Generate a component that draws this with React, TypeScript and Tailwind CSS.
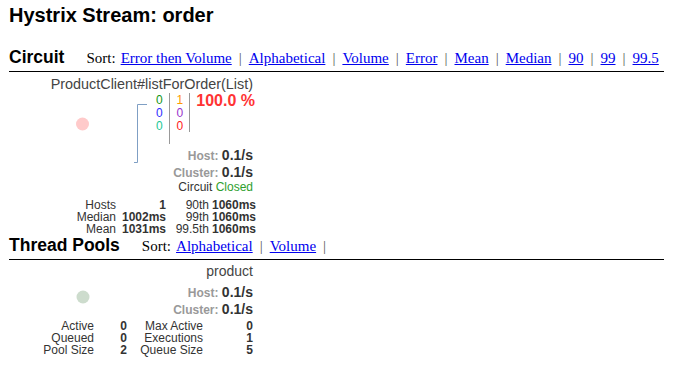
import React from 'react';

const sans = "font-['Liberation_Sans',Arial,sans-serif]";
const serif = "font-['Liberation_Serif','Times_New_Roman',serif]";

interface SortMenuProps {
  items: string[];
  trailing?: boolean;
}

const SortMenu: React.FC<SortMenuProps> = ({ items, trailing }) => (
  <div className={`${serif} text-[15px] leading-[22px] text-black ml-[22px] flex items-baseline`}>
    <span>Sort:</span>
    {items.map((item, idx) => (
      <React.Fragment key={item}>
        <a href="#" className={`text-[#0000ee] underline ${idx === 0 ? 'ml-[5px]' : ''}`}>
          {item}
        </a>
        {(idx < items.length - 1 || trailing) && <span className="mx-[7px] text-[#555]">|</span>}
      </React.Fragment>
    ))}
  </div>
);

const SectionHeader: React.FC<{ title: string; sort: string[]; trailing?: boolean; pb: string }> = ({
  title,
  sort,
  trailing,
  pb,
}) => (
  <div className={`flex items-baseline w-[655px] border-b border-black ${pb}`}>
    <h2 className="text-[17.5px] leading-[22px] font-bold text-black">{title}</h2>
    <SortMenu items={sort} trailing={trailing} />
  </div>
);

// fixed height so the mixed font sizes don't grow the line box
const RateRow: React.FC<{ label: string; value: string }> = ({ label, value }) => (
  <div className="h-[17px] text-[12px] leading-[16px]">
    <span className="font-bold text-[#999]">{label}: </span>
    <span className="text-[14px] font-bold text-[#333]">{value}</span>
  </div>
);

const circuitStats = [
  ['Hosts', '1', '90th', '1060ms'],
  ['Median', '1002ms', '99th', '1060ms'],
  ['Mean', '1031ms', '99.5th', '1060ms'],
];

const poolStats = [
  ['Active', '0', 'Max Active', '0'],
  ['Queued', '0', 'Executions', '1'],
  ['Pool Size', '2', 'Queue Size', '5'],
];

export default function App() {
  return (
    <div className={`${sans} bg-white min-h-[373px] pl-[9px] text-[#333]`}>
      <h1 className="pt-[3px] text-[20px] leading-[24px] font-bold text-black">Hystrix Stream: order</h1>

      {/* Circuit */}
      <div className="mt-[19px]">
        <SectionHeader
          title="Circuit"
          pb="pb-[2px]"
          sort={['Error then Volume', 'Alphabetical', 'Volume', 'Error', 'Mean', 'Median', '90', '99', '99.5']}
        />
      </div>

      <div className="relative w-[247px] h-[162px] text-right">
        <svg className="absolute inset-0 pointer-events-none" width="247" height="162">
          <circle cx="73.5" cy="52" r="6.5" fill="#ffcaca" />
          <polyline points="138,32.5 128.5,32.5 128.5,90.5 125,90.5" fill="none" stroke="#7f9fc4" strokeWidth="1" />
        </svg>

        <div className="pt-[4px] pr-[3px] text-[14.4px] leading-[16px] text-[#444]">ProductClient#listForOrder(List)</div>

        <div className="flex justify-end items-start mt-[1px] pr-[1px]">
          <div className="h-[51px] border-r border-[#999] pr-[6px] pt-[1px] text-[12px] leading-[13px]">
            <div className="text-[#139613]">0</div>
            <div className="text-[#2f2fff]">0</div>
            <div className="text-[#1cc896]">0</div>
          </div>
          <div className="h-[39px] border-r border-[#999] pl-[7px] pr-[6px] pt-[1px] text-[12px] leading-[13px]">
            <div className="text-[#ff9900]">1</div>
            <div className="text-[#9933cc]">0</div>
            <div className="text-[#ff1a1a]">0</div>
          </div>
          <div className="pl-[6px] text-[16px] leading-[16px] font-bold text-[#ff3333]">100.0 %</div>
        </div>

        <div className="mt-[3px] pr-[3px]">
          <RateRow label="Host" value="0.1/s" />
          <RateRow label="Cluster" value="0.1/s" />
          <div className="text-[12px] leading-[12px] text-[#333]">
            Circuit <span className="text-[#2ea02e]">Closed</span>
          </div>
        </div>

        <div className="mt-[6px] ml-auto w-fit grid grid-cols-[60px_50px_43px_47px] text-[12px] leading-[12px]">
          {circuitStats.map((row) => (
            <React.Fragment key={row[0]}>
              <div className="text-right text-[#333]">{row[0]}</div>
              <div className="text-right font-bold text-[#333]">{row[1]}</div>
              <div className="text-right text-[#333]">{row[2]}</div>
              <div className="text-right font-bold text-[#333]">{row[3]}</div>
            </React.Fragment>
          ))}
        </div>
      </div>

      {/* Thread Pools */}
      <SectionHeader title="Thread Pools" pb="pb-[2px]" sort={['Alphabetical', 'Volume']} trailing />

      <div className="relative w-[247px] text-right">
        <svg className="absolute inset-0 pointer-events-none" width="247" height="100">
          <circle cx="74" cy="37" r="6.5" fill="#cddccd" />
        </svg>

        <div className="pt-[3px] pr-[3px] text-[14px] leading-[16px] text-[#444]">product</div>

        <div className="mt-[5px] pr-[3px]">
          <RateRow label="Host" value="0.1/s" />
          <RateRow label="Cluster" value="0.1/s" />
        </div>

        <div className="mt-[2px] ml-auto mr-[3px] w-fit grid grid-cols-[64px_33px_76px_50px] text-[12px] leading-[12px]">
          {poolStats.map((row) => (
            <React.Fragment key={row[0]}>
              <div className="text-right text-[#333]">{row[0]}</div>
              <div className="text-right font-bold text-[#333]">{row[1]}</div>
              <div className="text-right text-[#333]">{row[2]}</div>
              <div className="text-right font-bold text-[#333]">{row[3]}</div>
            </React.Fragment>
          ))}
        </div>
      </div>
    </div>
  );
}
